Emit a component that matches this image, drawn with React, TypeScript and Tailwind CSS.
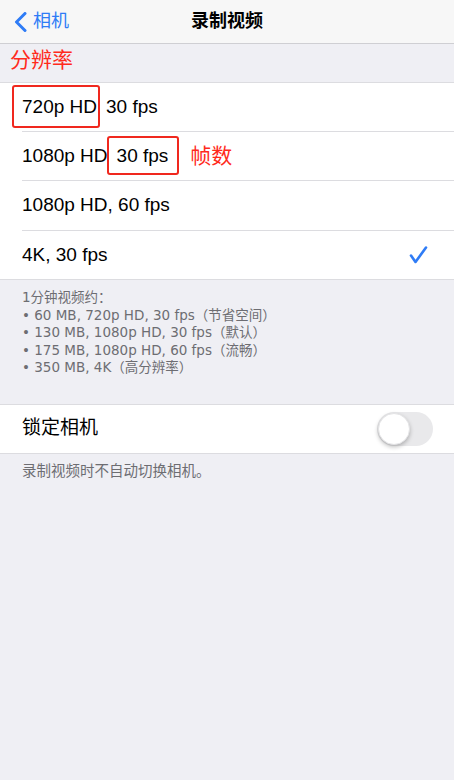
import React from "react";

const font = { fontFamily: '"Liberation Sans", "Noto Sans CJK SC", sans-serif' };
const noteFont = { fontFamily: '"DejaVu Sans", "Noto Sans CJK SC", sans-serif' };

const Check = () => (
  <svg width="20" height="18" viewBox="0 0 20 18" fill="none" className="mr-[25px]">
    <path d="M2 9.5L6.5 16L17 1.5" stroke="#2f7cf6" strokeWidth="2.6" strokeLinecap="round" strokeLinejoin="round" />
  </svg>
);

const App = () => {
  return (
    <div className="w-[454px] h-[780px] bg-[#efeff4] text-black" style={font}>
      {/* nav bar */}
      <header className="relative h-[44px] bg-[#f7f7f7] border-b border-[#cfcfd3] flex items-center">
        <div className="flex items-center pl-[13px] text-[#2f7cf6] text-[18px] leading-none">
          <svg width="16" height="20" viewBox="0 0 16 20" fill="none">
            <path d="M12 1.5L3.5 10L12 18.5" stroke="#2f7cf6" strokeWidth="3" strokeLinecap="round" strokeLinejoin="round" />
          </svg>
          <span className="ml-[4px] -mt-[1px]">相机</span>
        </div>
        <div className="absolute inset-x-0 top-0 h-[43px] flex items-center justify-center pointer-events-none">
          <span className="text-[18px] font-semibold">录制视频</span>
        </div>
      </header>

      {/* section header */}
      <div className="h-[38px] pl-[10px] pt-[5px] text-[21px] leading-[21px] text-[#ff2a1c]">分辨率</div>

      {/* resolution list */}
      <div className="bg-white border-y border-[#dcdce0] text-[19px]">
        <div className="relative h-[48px] flex items-center pl-[22px]">
          <span>720p HD</span>
          <span className="ml-[9px]">30 fps</span>
          <div className="absolute left-[12px] top-[2px] w-[88px] h-[43px] border-[2.5px] border-[#f0281e] rounded-[3px]" />
        </div>
        <div className="ml-[22px] border-t border-[#dcdce0]" />
        <div className="relative h-[48px] flex items-center pl-[22px]">
          <span>1080p HD</span>
          <span className="ml-[9px]">30 fps</span>
          <span className="ml-[22px] text-[21px] text-[#ff2a1c]">帧数</span>
          <div className="absolute left-[107px] top-[4px] w-[72px] h-[39px] border-[2.5px] border-[#f0281e] rounded-[3px]" />
        </div>
        <div className="ml-[22px] border-t border-[#dcdce0]" />
        <div className="h-[49px] flex items-center pl-[22px]">
          <span>1080p HD, 60 fps</span>
        </div>
        <div className="ml-[22px] border-t border-[#dcdce0]" />
        <div className="h-[48px] flex items-center justify-between pl-[22px]">
          <span>4K, 30 fps</span>
          <Check />
        </div>
      </div>

      {/* footnote */}
      <div className="pl-[22px] pt-[9px] pb-[27px] text-[13.5px] leading-[17.5px] text-[#6d6d72]" style={noteFont}>
        <div>1分钟视频约：</div>
        <div>• 60 MB, 720p HD, 30 fps（节省空间）</div>
        <div>• 130 MB, 1080p HD, 30 fps（默认）</div>
        <div>• 175 MB, 1080p HD, 60 fps（流畅）</div>
        <div>• 350 MB, 4K（高分辨率）</div>
      </div>

      {/* lock camera */}
      <div className="bg-white border-y border-[#dcdce0] h-[50px] flex items-center justify-between pl-[22px] pr-[21px]">
        <span className="text-[19px]">锁定相机</span>
        <div className="w-[56px] h-[34px] rounded-full bg-[#e9e9eb] p-[1px] flex items-center">
          <div className="w-[32px] h-[32px] rounded-full bg-white shadow-[0_2px_4px_rgba(0,0,0,0.25)] border border-[#e4e4e6]" />
        </div>
      </div>
      <div className="pl-[22px] pt-[8px] text-[14.5px] leading-[18px] text-[#6d6d72]">录制视频时不自动切换相机。</div>
    </div>
  );
};

export default App;
